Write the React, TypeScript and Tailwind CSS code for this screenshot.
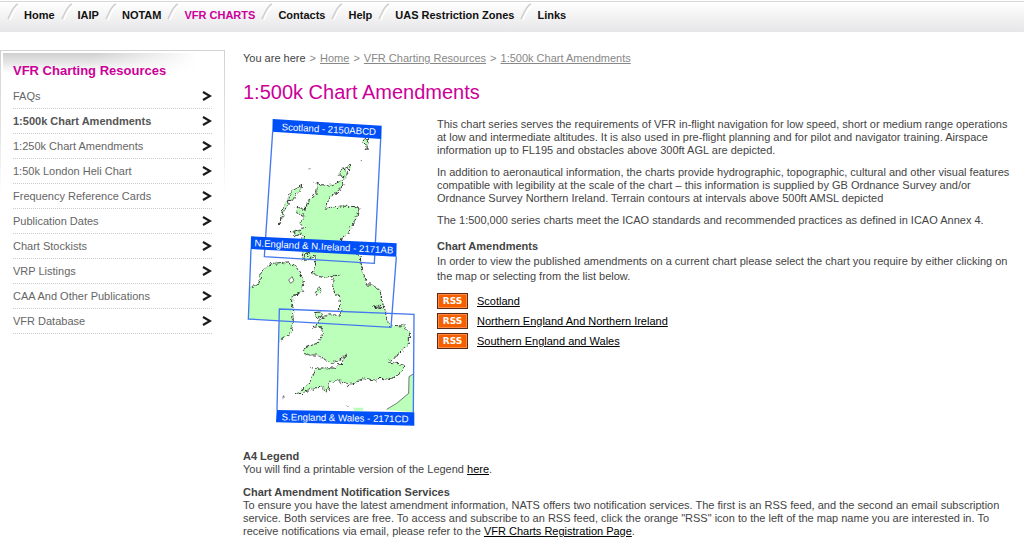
import clsx from 'clsx';

const navItems = ['Home', 'IAIP', 'NOTAM', 'VFR CHARTS', 'Contacts', 'Help', 'UAS Restriction Zones', 'Links'];

const resources = [
  'FAQs',
  '1:500k Chart Amendments',
  '1:250k Chart Amendments',
  '1:50k London Heli Chart',
  'Frequency Reference Cards',
  'Publication Dates',
  'Chart Stockists',
  'VRP Listings',
  'CAA And Other Publications',
  'VFR Database',
];

const crumbs = ['Home', 'VFR Charting Resources', '1:500k Chart Amendments'];

const feeds = ['Scotland', 'Northern England And Northern Ireland', 'Southern England and Wales'];

function TopNav() {
  return (
    <nav className="mt-px h-[31px] border-t border-[#d8d8d8] bg-linear-to-b from-white to-[#e6e6e8]">
      <ul className="flex pl-1 text-[11px] leading-[26px] font-bold text-[#111]">
        {navItems.map((item) => (
          <li key={item} className="flex pr-[3px]">
            <svg width="20" height="26" viewBox="0 0 20 26" fill="none" aria-hidden="true">
              <path d="M4 17C7 11 9 4 14 2" stroke="#cfcfcf" strokeWidth="1.5" />
              <path d="M6 18C9 12 11 5 16 3" stroke="#fff" strokeWidth="1.5" />
            </svg>
            <a href="#" className={clsx(item === 'VFR CHARTS' && 'text-[#cc0099]')}>{item}</a>
          </li>
        ))}
      </ul>
    </nav>
  );
}

function Sidebar() {
  return (
    <aside className="w-[225px] shrink-0 self-start bg-linear-to-b from-[#d2d2d2] via-[#e4e4e4] via-30% to-white to-50% p-px">
      <div className="bg-white pt-[2px] pl-[2px]">
        <div className="bg-[linear-gradient(to_right,transparent_40%,white_88%),linear-gradient(to_bottom,#cfcfcf,white_20px)] pr-3 pl-[10px]">
          <h2 className="pt-[10px] text-[13px] leading-[16px] font-bold text-[#cc0099]">VFR Charting Resources</h2>
          <ul className="pt-[5px] text-[11px] text-[#666]">
            {resources.map((item) => (
              <li key={item} className="border-b border-dotted border-[#ccc]">
                <a href="#" className="flex h-[24px] items-center justify-between">
                  <span className={clsx(item === '1:500k Chart Amendments' && 'font-bold text-[#555]')}>{item}</span>
                  <svg width="10" height="12" viewBox="0 0 10 12" fill="none" aria-hidden="true">
                    <path d="M1 2L8 6L1 10" stroke="#1a1a1a" strokeWidth="2.2" />
                  </svg>
                </a>
              </li>
            ))}
          </ul>
        </div>
      </div>
    </aside>
  );
}

function ChartMap() {
  return (
    <svg width="180" height="320" viewBox="9 0 540 960" role="img" aria-label="Chart coverage map" className="shrink-0">
      <defs>
        <filter id="coast" x="0" y="0" width="540" height="960" filterUnits="userSpaceOnUse" colorInterpolationFilters="sRGB">
          <feTurbulence type="fractalNoise" baseFrequency="0.08" numOctaves="2" seed="4" />
          <feDisplacementMap in="SourceGraphic" scale="18" xChannelSelector="R" yChannelSelector="G" />
        </filter>
      </defs>
      <g filter="url(#coast)" fill="#bbffbb" stroke="#333" strokeWidth="3" strokeDasharray="16 4 7 3">
        {/* Great Britain */}
        <path d="M228 215L245 224L268 228L305 212L309 225L292 245L266 266L256 295L275 292L300 288L350 290L357 300L345 332L325 368L300 387L330 420L360 440L366 475L380 525L400 525L420 545L432 590L400 588L434 596L445 640L448 650L455 646L490 648L508 665L508 700L490 720L460 745L445 756L470 760L495 765L490 782L465 802L440 807L400 810L370 803L360 815L320 825L305 813L270 813L262 845L245 832L210 835L190 850L165 852L195 835L210 815L230 775L262 773L290 775L310 750L320 733L300 750L270 760L250 745L235 735L205 735L190 728L192 715L230 700L247 680L245 650L218 652L235 635L260 615L300 615L305 605L298 595L302 560L285 555L278 525L280 500L298 493L265 503L240 500L215 490L228 460L222 435L203 455L207 420L185 455L190 410L165 400L195 380L150 368L195 352L180 338L198 320L172 308L165 288L195 300L205 270L220 262L232 240Z" />
        {/* islands */}
        <path d="M185 222L182 244L166 252L160 270L146 272L150 250L164 238Z" />
        <path d="M144 272L148 282L132 302L128 320L118 342L126 310L128 290Z" />
        <path d="M302 180L318 172L322 188L308 206L298 194ZM320 172L334 162L328 180Z" />
        <path d="M374 86L386 86L384 100L380 120L376 104L366 98Z" />
        <path d="M226 548L240 530L242 542L232 556Z" />
        <path d="M226 608L245 606L248 618L234 626Z" />
        <path d="M160 368L176 362L180 372L164 380ZM196 434L208 430L210 446L198 454Z" />
        <path d="M195 172h3M206 174h3M350 103h4M364 149h4M128 863l5 -3M214 773l5 1M320 890l9 1" />
      </g>
      <path d="M340 893L370 893L370 902L342 902Z" fill="#bbffbb" />
      <path d="M520 792L507 800L506 850L470 880L440 900L520 907Z" fill="#bbffbb" />
      <path d="M520 792L507 800L506 850L470 880L440 898" fill="none" stroke="#333" strokeWidth="2" />
      {/* Ireland, cut off at the chart edges */}
      <path d="M29 530L50 527L62 505L55 500L80 470L100 460L130 457L165 465L180 490L190 510L185 545L158 560L158 605L160 635L154 665L145 675L118 692L118 632L26 627Z" fill="#bbffbb" />
      <path filter="url(#coast)" d="M32 530L50 527L62 505L55 500L80 470L100 460L130 457L165 465L180 490L190 510L185 545L158 560L158 605L160 635L154 665L145 675L122 690" fill="none" stroke="#333" strokeWidth="3" strokeDasharray="16 4 7 3" />
      <path d="M146 510L156 500L162 512L152 520Z" fill="#fff" stroke="#333" strokeWidth="2" />
      <g fill="none" stroke="#4478ee" strokeWidth="4">
        <path d="M98 65L73 440L403 460L422 87" />
        <path d="M33 417L25 627L453 652L469 440" />
        <path d="M111 900L118 597L522 613L520 906" />
      </g>
      <g fill="#0050f8">
        <path d="M98 27L425 47L424 87L97 65Z" />
        <path d="M33 379L470 400L469 440L32 417Z" />
        <path d="M110 900L523 907L523 947L108 937Z" />
      </g>
      <g fill="#fff" fontSize="29" textAnchor="middle" className="font-['Liberation_Sans',Arial,sans-serif]">
        <text transform="translate(266 68) rotate(3)">Scotland - 2150ABCD</text>
        <text transform="translate(251 420) rotate(3)">N.England &amp; N.Ireland - 2171AB</text>
        <text transform="translate(315 934) rotate(1)">S.England &amp; Wales - 2171CD</text>
      </g>
    </svg>
  );
}

function Rss({ name }: { name: string }) {
  return (
    <li className="flex h-5 items-center gap-[9px]">
      <a
        href="#"
        aria-label={`${name} RSS feed`}
        className="flex h-4 w-[31px] items-center justify-center border border-[#5c2a18] bg-[#f56100] font-['DejaVu_Sans',sans-serif] text-[9px] font-bold text-white inset-ring inset-ring-[#ff8b42]"
      >
        RSS
      </a>
      <a href="#" className="text-black underline">{name}</a>
    </li>
  );
}

export default function App() {
  return (
    <div className="bg-white font-['Liberation_Sans',Arial,sans-serif] text-[11px] leading-[13px] text-[#444]">
      <TopNav />
      <div className="flex gap-[18px] pt-[18px]">
        <Sidebar />
        <main className="min-w-0 flex-1 pr-3">
          <ol className="flex gap-1 leading-[16px]">
            <li>You are here</li>
            {crumbs.map((crumb) => (
              <li key={crumb} className="flex gap-1 text-[#888]">
                <span>&gt;</span>
                <a href="#" className="underline">{crumb}</a>
              </li>
            ))}
          </ol>
          <h1 className="pt-[14px] text-[20px] leading-[24px] text-[#cc0099]">1:500k Chart Amendments</h1>
          <div className="flex gap-[14px] pt-[6px]">
            <ChartMap />
            <div className="flex min-w-0 flex-1 flex-col gap-[9px] pt-2">
              <p>
                This chart series serves the requirements of VFR in-flight navigation for low speed, short or medium range operations<br />
                at low and intermediate altitudes. It is also used in pre-flight planning and for pilot and navigator training. Airspace<br />
                information up to FL195 and obstacles above 300ft AGL are depicted.
              </p>
              <p>
                In addition to aeronautical information, the charts provide hydrographic, topographic, cultural and other visual features<br />
                compatible with legibility at the scale of the chart – this information is supplied by GB Ordnance Survey and/or<br />
                Ordnance Survey Northern Ireland. Terrain contours at intervals above 500ft AMSL depicted
              </p>
              <p>The 1:500,000 series charts meet the ICAO standards and recommended practices as defined in ICAO Annex 4.</p>
              <section className="pt-[3px] leading-[15px]">
                <h2 className="font-bold">Chart Amendments</h2>
                <p>
                  In order to view the published amendments on a current chart please select the chart you require by either clicking on<br />
                  the map or selecting from the list below.
                </p>
                <ul className="pt-[7px]">
                  {feeds.map((feed) => (
                    <Rss key={feed} name={feed} />
                  ))}
                </ul>
              </section>
            </div>
          </div>
          <section className="pt-5">
            <h2 className="font-bold">A4 Legend</h2>
            <p>
              You will find a printable version of the Legend <a href="#" className="text-black underline">here</a>.
            </p>
          </section>
          <section className="pt-[10px] pb-[5px]">
            <h2 className="font-bold">Chart Amendment Notification Services</h2>
            <p>
              To ensure you have the latest amendment information, NATS offers two notification services. The first is an RSS feed, and the second an email subscription<br />
              service. Both services are free. To access and subscribe to an RSS feed, click the orange "RSS" icon to the left of the map name you are interested in. To<br />
              receive notifications via email, please refer to the <a href="#" className="text-black underline">VFR Charts Registration Page</a>.
            </p>
          </section>
        </main>
      </div>
    </div>
  );
}
